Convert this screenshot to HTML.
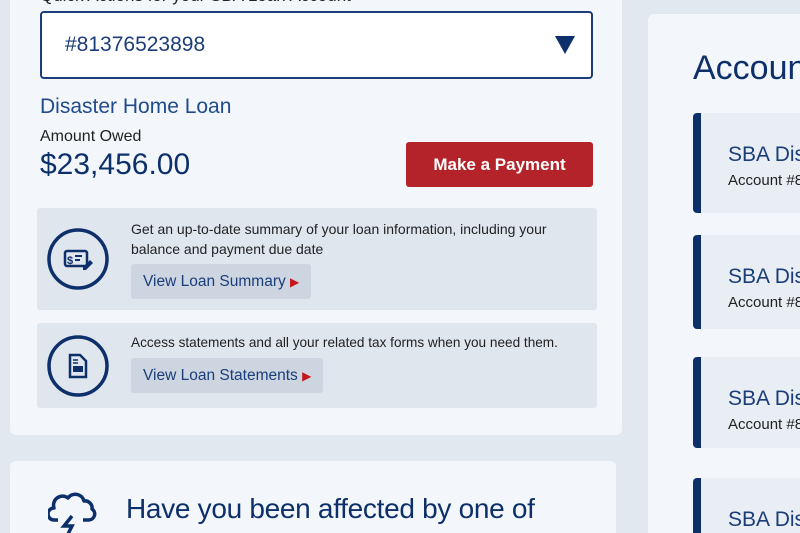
<!DOCTYPE html>
<html><head><meta charset="utf-8"><style>
*{margin:0;padding:0;box-sizing:border-box}
html,body{width:800px;height:533px;overflow:hidden}
body{background:#e2e8ef;font-family:"Liberation Sans",sans-serif;position:relative}
.a{position:absolute}
.card{background:#f3f7fb;border-radius:6px}
.navy{color:#0d2f6a}
.panel{background:#e0e6ee;border-radius:3px}
.btn2{background:#ccd5e0;border-radius:3px;color:#1b3d7a;font-size:15.5px;padding:0 12px;line-height:35px;height:35px;white-space:nowrap}
.acc{left:693px;width:107px;background:#e8eef3;border-left:8px solid #0d2f6a;border-radius:4px 0 0 4px;overflow:hidden}
.acc .t{position:absolute;left:27px;top:30px;font-size:21px;color:#1b3d7a;white-space:nowrap}
.acc .s{position:absolute;left:27px;top:59px;font-size:15px;color:#222;white-space:nowrap}
</style></head><body>
<div class="a card" style="left:10px;top:-10px;width:612px;height:445px"></div>
<div class="a" style="left:40px;top:-14px;font-size:17px;color:#222;white-space:nowrap">Quick Actions for your SBA Loan Account</div>
<div class="a" style="left:40px;top:11px;width:553px;height:68px;background:#fff;border:2px solid #1b3d7a;border-radius:4px"></div>
<div class="a" style="left:65px;top:33px;font-size:21px;color:#1b3d7a">#81376523898</div>
<svg class="a" style="left:555px;top:36px" width="20" height="19"><polygon points="0,0 20,0 10,18" fill="#0d2f6a"/></svg>
<div class="a" style="left:40px;top:95px;font-size:21px;color:#1f4a8c">Disaster Home Loan</div>
<div class="a" style="left:40px;top:128px;font-size:16px;color:#222">Amount Owed</div>
<div class="a" style="left:40px;top:148px;font-size:30px;color:#0d2f6a">$23,456.00</div>
<div class="a" style="left:406px;top:142px;width:187px;height:45px;background:#b5232a;border-radius:3px;color:#fff;font-weight:bold;font-size:17px;text-align:center;line-height:45px">Make a Payment</div>

<div class="a panel" style="left:37px;top:208px;width:560px;height:102px"></div>
<svg class="a" style="left:46px;top:227px" width="64" height="64"><circle cx="32" cy="32" r="29" fill="none" stroke="#0d2f6a" stroke-width="3.5"/><rect x="19" y="24" width="22" height="15" rx="2" fill="none" stroke="#0d2f6a" stroke-width="2.5"/><text x="21" y="37" font-size="11" font-weight="bold" fill="#0d2f6a" font-family="Liberation Sans">$</text><path d="M29 29h7M29 33h5" stroke="#0d2f6a" stroke-width="2"/><path d="M37 40l7-7 3 3-7 7h-3z" fill="#0d2f6a"/></svg>
<div class="a" style="left:131px;top:219px;font-size:14px;line-height:20px;color:#222;width:460px">Get an up-to-date summary of your loan information, including your balance and payment due date</div>
<div class="a btn2" style="left:131px;top:264px">View Loan Summary <span style="color:#c4161c;font-size:12px">&#9654;</span></div>

<div class="a panel" style="left:37px;top:323px;width:560px;height:85px"></div>
<svg class="a" style="left:46px;top:334px" width="64" height="64"><circle cx="32" cy="32" r="29" fill="none" stroke="#0d2f6a" stroke-width="3.5"/><path d="M24 21h10l6 6v16h-16z" fill="none" stroke="#0d2f6a" stroke-width="2.5"/><rect x="27" y="32" width="10" height="6" fill="#0d2f6a"/><path d="M27 26h5M27 29h5" stroke="#0d2f6a" stroke-width="1.5"/></svg>
<div class="a" style="left:131px;top:335px;font-size:13.6px;color:#222;white-space:nowrap">Access statements and all your related tax forms when you need them.</div>
<div class="a btn2" style="left:131px;top:358px">View Loan Statements <span style="color:#c4161c;font-size:12px">&#9654;</span></div>

<div class="a card" style="left:10px;top:461px;width:606px;height:72px;border-radius:6px 6px 0 0"></div>
<svg class="a" style="left:48px;top:492px" width="52" height="41"><path d="M10 28H6a5 5 0 0 1 0-12 9 9 0 0 1 14-10 9 9 0 0 1 16 3 7 7 0 0 1 8 8 6 6 0 0 1-3 11h-6" fill="none" stroke="#0d2f6a" stroke-width="3.5" stroke-linejoin="round"/><path d="M24 24l-8 10h8l-4 8" fill="none" stroke="#0d2f6a" stroke-width="3.5"/></svg>
<div class="a navy" style="left:126px;top:492px;font-size:28px;line-height:34px;letter-spacing:-0.3px;white-space:nowrap">Have you been affected by one of</div>

<div class="a card" style="left:648px;top:14px;width:152px;height:519px;border-radius:6px 0 0 0"></div>
<div class="a navy" style="left:693px;top:49px;font-size:34px;white-space:nowrap">Accounts</div>
<div class="a acc" style="top:113px;height:100px"><div class="t">SBA Disaster</div><div class="s">Account #8</div></div>
<div class="a acc" style="top:235px;height:94px"><div class="t">SBA Disaster</div><div class="s">Account #8</div></div>
<div class="a acc" style="top:357px;height:91px"><div class="t">SBA Disaster</div><div class="s">Account #8</div></div>
<div class="a acc" style="top:478px;height:55px;border-radius:4px 0 0 0"><div class="t">SBA Disaster</div></div>
</body></html>
